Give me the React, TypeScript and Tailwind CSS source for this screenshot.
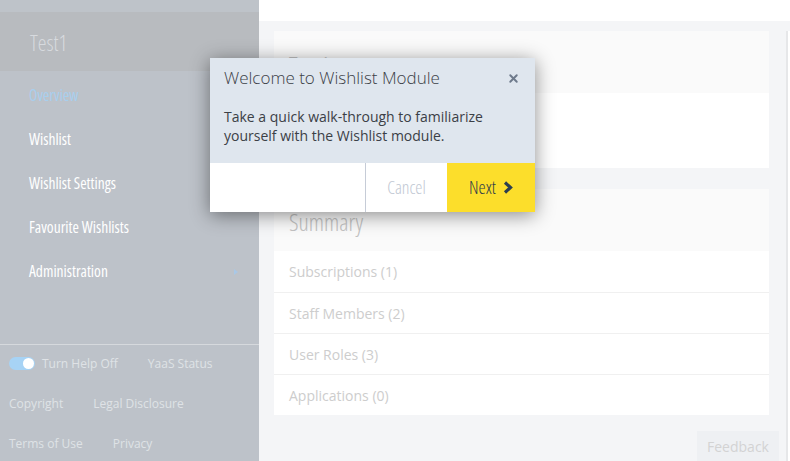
import React from 'react';
import { X } from 'lucide-react';

const navItems = ['Wishlist', 'Wishlist Settings', 'Favourite Wishlists', 'Administration'];
const summaryRows = ['Subscriptions (1)', 'Staff Members (2)', 'User Roles (3)', 'Applications (0)'];

function Sidebar() {
  return (
    <div className="w-[259px] shrink-0 h-full flex flex-col bg-[#bdc2c9]">
      <div className="h-[12px] bg-[#bec3c9]" />
      <div className="h-[59px] bg-[#b8bbbf] flex items-center pl-[30px]">
        <span className="text-[22px] text-[#d7dade] font-light font-stretch-condensed leading-none">Test1</span>
      </div>
      <div className="pt-[3px]">
        <div className="h-[44px] flex items-center pl-[29px] text-[15.5px] text-[#a8cfee] font-stretch-condensed">
          Overview
        </div>
        {navItems.map((item) => (
          <div
            key={item}
            className="h-[44px] flex items-center justify-between pl-[29px] pr-[21px] text-[15.5px] text-white font-medium font-stretch-condensed"
          >
            <span>{item}</span>
            {item === 'Administration' && (
              <span className="w-0 h-0 border-y-[3.5px] border-y-transparent border-l-[4px] border-l-[#a9c8e6]" />
            )}
          </div>
        ))}
      </div>
      <div className="mt-auto h-[117px] shrink-0 border-t border-[#d6d9dd] text-[12px] text-[#dfe2e6]">
        <div className="h-[37px] flex items-center pl-[9px]">
          <span className="w-[26px] h-[13px] rounded-full bg-[#a7d3f5] flex items-center justify-end pr-[1px]">
            <span className="w-[11px] h-[11px] rounded-full bg-white" />
          </span>
          <span className="ml-[7px]">Turn Help Off</span>
          <span className="ml-[30px]">YaaS Status</span>
        </div>
        <div className="h-[43px] flex items-center pl-[9px]">
          <span>Copyright</span>
          <span className="ml-[30px]">Legal Disclosure</span>
        </div>
        <div className="h-[37px] flex items-center pl-[9px]">
          <span>Terms of Use</span>
          <span className="ml-[30px]">Privacy</span>
        </div>
      </div>
    </div>
  );
}

function Main() {
  return (
    <div className="flex-1 h-full flex flex-col bg-[#f4f5f7] overflow-hidden">
      <div className="h-[21px] bg-white shrink-0" />
      <div className="flex pt-[10px] pl-[15px] gap-[17px]">
        <div className="w-[495px] shrink-0 flex flex-col">
          <div className="bg-white">
            <div className="h-[62px] bg-[#fafafa] flex items-center pl-[15px] pt-[6px]">
              <span className="text-[24px] text-[#c2c2c2] font-light font-stretch-condensed">Test1</span>
            </div>
            <div className="h-[75px]" />
          </div>
          <div className="bg-white mt-[21px]">
            <div className="h-[62px] bg-[#fafafa] flex items-center pl-[15px] pt-[4px]">
              <span className="text-[24px] text-[#c2c2c2] font-light font-stretch-condensed">Summary</span>
            </div>
            {summaryRows.map((row, i) => (
              <div
                key={row}
                className={`h-[41px] flex items-center pl-[15px] text-[14px] text-[#cdcdcd] ${i > 0 ? 'border-t border-[#f0f0f0]' : ''}`}
              >
                {row}
              </div>
            ))}
          </div>
          <div className="flex justify-end mt-[16px] mr-[-10px]">
            <div className="h-[30px] w-[82px] bg-[#eef0f3] flex items-center justify-center text-[14px] text-[#d3d3d3]">
              Feedback
            </div>
          </div>
        </div>
        <div className="w-[20px] h-[430px] bg-white border-l-2 border-[#e6e7e9]" />
      </div>
    </div>
  );
}

function WelcomeModal() {
  return (
    <div className="absolute left-[210px] top-[58px] w-[325px] shadow-[0_3px_18px_rgba(0,0,0,0.45)]">
      <div className="bg-[#dfe6ee] h-[105px] px-[14px] pt-[7px]">
        <div className="flex items-center justify-between">
          <span className="text-[17px] text-[#3b4046] font-light leading-[26px]">
            Welcome to Wishlist Module
          </span>
          <X size={13} strokeWidth={3.5} className="text-[#6e7a8b] mr-[1px]" />
        </div>
        <p className="mt-[16px] text-[14px] leading-[19px] text-[#3b4046]">
          Take a quick walk-through to familiarize yourself with the Wishlist module.
        </p>
      </div>
      <div className="h-[49px] flex bg-white">
        <div className="w-[156px] border-r border-[#c6ccd7]" />
        <div className="w-[81px] flex items-center justify-center text-[18px] text-[#c1c8d3] font-light font-stretch-condensed">
          Cancel
        </div>
        <div className="flex-1 bg-[#fcde2b] flex items-center justify-center gap-[7px] text-[18px] text-[#2e3b4a] font-light font-stretch-condensed">
          <span>Next</span>
          <svg width="10" height="13" viewBox="0 0 10 13">
            <path d="M2 1.5 L7.5 6.5 L2 11.5" fill="none" stroke="#2c3e50" strokeWidth="3.2" strokeLinejoin="miter" />
          </svg>
        </div>
      </div>
    </div>
  );
}

export default function App() {
  return (
    <div
      className="relative w-[790px] h-[461px] overflow-hidden flex"
      style={{ fontFamily: '"Open Sans", "Noto Sans", sans-serif' }}
    >
      <Sidebar />
      <Main />
      <WelcomeModal />
    </div>
  );
}
